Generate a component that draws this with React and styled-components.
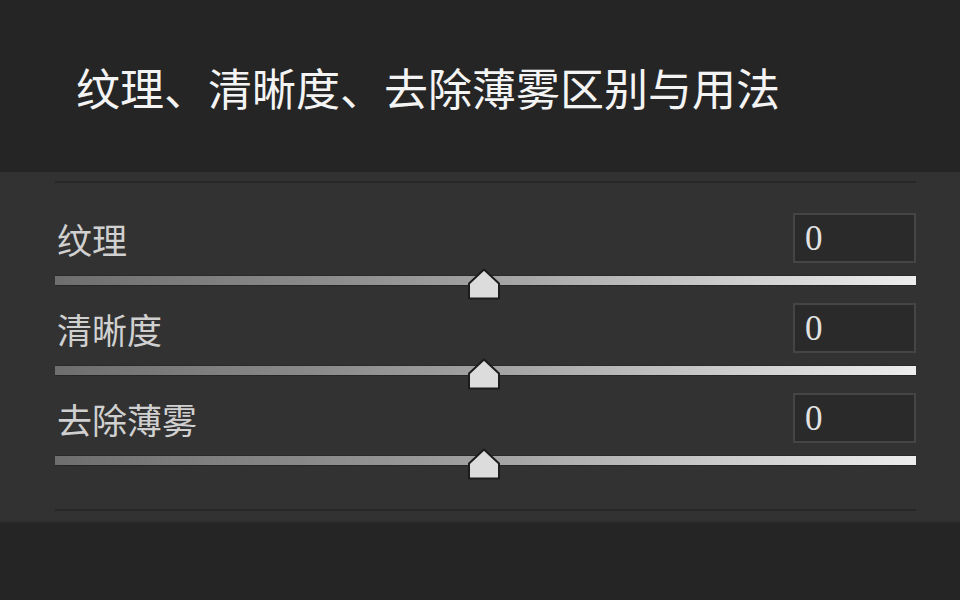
import styled, { createGlobalStyle } from 'styled-components';

const GlobalStyle = createGlobalStyle`
  html, body {
    margin: 0;
    padding: 0;
    background: #252525;
  }
  body {
    width: 960px;
    height: 600px;
    overflow: hidden;
    font-family: "Noto Sans CJK SC", "Noto Sans", sans-serif;
  }
`

const Page = styled.div`
  display: flex;
  flex-direction: column;
  width: 960px;
  height: 600px;
  background: #252525;
`
const Header = styled.div`
  display: flex;
  align-items: center;
  height: 172px;
  padding: 2px 0 0 76px;
  box-sizing: border-box;
`
const Title = styled.h1`
  margin: 0;
  font-size: 44px;
  font-weight: 400;
  line-height: 1;
  color: #f4f4f4;
  letter-spacing: 0;
`
const Panel = styled.div`
  display: flex;
  flex-direction: column;
  padding: 9px 44px 10px 55px;
  background: #323232;
  border-bottom: 2px solid #2b2b2b;
`
const Divider = styled.div`
  height: 2px;
  background: #272727;
  margin-bottom: ${p => p.$after || 0}px;
  margin-top: ${p => p.$before || 0}px;
`
const Sliders = styled.div`
  display: flex;
  flex-direction: column;
  gap: 18px;
`
const Row = styled.div`
  display: flex;
  flex-direction: column;
`
const RowHead = styled.div`
  display: flex;
  align-items: center;
  justify-content: space-between;
  height: 50px;
`
const Label = styled.span`
  font-size: 35px;
  line-height: 1;
  color: #d0d0d0;
  padding-left: 2px;
`
const ValueBox = styled.div`
  display: flex;
  align-items: center;
  width: 123px;
  height: 50px;
  box-sizing: border-box;
  padding: 2px 0 0 10px;
  background: #2a2a2a;
  border: 2px solid #454545;
  font-family: "Liberation Serif", "Times New Roman", serif;
  font-size: 35px;
  color: #e2e2e2;
`
const Track = styled.div`
  position: relative;
  height: 9px;
  margin-top: 13px;
  background: linear-gradient(to right, #6e6e6e 0%, #8a8a8a 30%, #a8a8a8 55%, #cfcfcf 80%, #ededed 100%);
  box-shadow: 0 1px 0 #262626, 0 -1px 0 #2a2a2a;
`
const Thumb = styled.svg`
  position: absolute;
  top: -8px;
  left: calc(${p => p.$pos}% - 1.5px);
  width: 33px;
  height: 32px;
  transform: translateX(-50%);
  overflow: visible;
`

const sliders = [
  { name: '纹理', value: 0 },
  { name: '清晰度', value: 0 },
  { name: '去除薄雾', value: 0 },
]

const Slider = ({ name, value }) => (
  <Row>
    <RowHead>
      <Label>{name}</Label>
      <ValueBox>{value}</ValueBox>
    </RowHead>
    <Track>
      <Thumb $pos={50 + value / 2} viewBox="0 0 33 32">
        <polygon
          points="16.5,1.5 31.5,15.5 31.5,30.5 1.5,30.5 1.5,15.5"
          fill="#dcdcdc"
          stroke="#1c1c1c"
          strokeWidth="2"
          strokeLinejoin="round"
        />
      </Thumb>
    </Track>
  </Row>
)

const App = () => (
  <Page>
    <GlobalStyle />
    <Header>
      <Title>纹理、清晰度、去除薄雾区别与用法</Title>
    </Header>
    <Panel>
      <Divider $after={30} />
      <Sliders>
        {sliders.map(s => <Slider key={s.name} {...s} />)}
      </Sliders>
      <Divider $before={44} />
    </Panel>
  </Page>
)

export default App
